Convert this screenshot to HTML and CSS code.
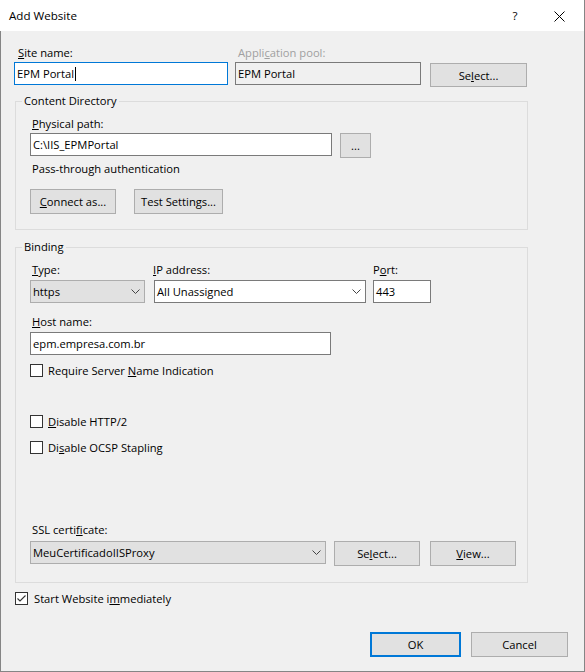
FILE: index.html
```html
<!DOCTYPE html>
<html>
<head>
<meta charset="utf-8">
<title>Add Website</title>
<link rel="stylesheet" href="styles.css">
</head>
<body>
<div class="window">
  <div class="titlebar">
    <span class="title">Add Website</span>
    <span class="help">?</span>
    <svg class="close" width="11" height="11" viewBox="0 0 11 11"><path d="M0.5 0.5 L10.5 10.5 M10.5 0.5 L0.5 10.5" stroke="#000" stroke-width="1" fill="none"/></svg>
  </div>
  <div class="body">
    <div class="toprow">
      <div class="lbl lbl-site"><u>S</u>ite name:</div>
      <div class="lbl lbl-pool disabled-text">Appli<u>c</u>ation pool:</div>
      <div></div>
      <div class="field focus w-site">EPM Portal<span class="caret"></span></div>
      <div class="field disabled w-pool">EPM Portal</div>
      <div class="btn btn-pool">Se<u>l</u>ect...</div>
    </div>

    <fieldset class="group content-dir">
      <legend>Content Directory</legend>
      <div class="lbl pl2"><u>P</u>hysical path:</div>
      <div class="row path-row">
        <div class="field w-path">C:\IIS_EPMPortal</div>
        <div class="btn btn-dots">...</div>
      </div>
      <div class="lbl pl2 pass">Pass-through authentication</div>
      <div class="row btn-row">
        <div class="btn btn-connect"><u>C</u>onnect as...</div>
        <div class="btn btn-test">Test Settin<u>g</u>s...</div>
      </div>
    </fieldset>

    <fieldset class="group binding">
      <legend>Binding</legend>
      <div class="bind-grid">
        <div class="lbl pl2"><u>T</u>ype:</div>
        <div class="lbl lbl-ip"><u>I</u>P address:</div>
        <div class="lbl">P<u>o</u>rt:</div>
        <div class="select w-type"><span>https</span><svg class="chev" width="9" height="5" viewBox="0 0 9 5"><path d="M0.5 0.5 L4.5 4.5 L8.5 0.5" stroke="#444" stroke-width="1" fill="none"/></svg></div>
        <div class="field combo w-ip"><span>All Unassigned</span><svg class="chev" width="9" height="5" viewBox="0 0 9 5"><path d="M0.5 0.5 L4.5 4.5 L8.5 0.5" stroke="#444" stroke-width="1" fill="none"/></svg></div>
        <div class="field w-port">443</div>
      </div>
      <div class="lbl pl2 host-lbl"><u>H</u>ost name:</div>
      <div class="field w-host host">epm.empresa.com.br</div>

      <div class="check sni"><span class="box"></span><span class="ctext">Require Server <u>N</u>ame Indication</span></div>
      <div class="check http2"><span class="box"></span><span class="ctext"><u>D</u>isable HTTP/2</span></div>
      <div class="check ocsp"><span class="box"></span><span class="ctext">Di<u>s</u>able OCSP Stapling</span></div>

      <div class="lbl pl2 ssl-lbl">SSL certi<u>f</u>icate:</div>
      <div class="row ssl-row">
        <div class="select w-ssl"><span>MeuCertificadoIISProxy</span><svg class="chev" width="9" height="5" viewBox="0 0 9 5"><path d="M0.5 0.5 L4.5 4.5 L8.5 0.5" stroke="#444" stroke-width="1" fill="none"/></svg></div>
        <div class="btn btn-ssl-select">Se<u>l</u>ect...</div>
        <div class="btn btn-view"><u>V</u>iew...</div>
      </div>
    </fieldset>

    <div class="check start"><span class="box checked"><svg width="11" height="11" viewBox="0 0 11 11"><path d="M1.5 5.5 L4 8 L9.5 2.5" stroke="#333" stroke-width="1.1" fill="none"/></svg></span><span class="ctext">Start Website i<u>m</u>mediately</span></div>

    <div class="actions">
      <div class="btn btn-ok">OK</div>
      <div class="btn btn-cancel">Cancel</div>
    </div>
  </div>
</div>
</body>
</html>
```
FILE: styles.css
```css
* { box-sizing: border-box; }
html, body { margin: 0; padding: 0; }
body {
  font-family: "Open Sans", "Noto Sans", sans-serif;
  font-size: 11.2px;
  color: #000;
  background: #fff;
}
u { text-decoration: underline; text-underline-offset: 1px; }

.window {
  width: 585px;
  height: 672px;
  border-right: 1px solid #858585;
  border-bottom: 1px solid #858585;
  display: flex;
  flex-direction: column;
  background: #f0f0f0;
}
.titlebar {
  height: 31px;
  flex: none;
  background: #fff;
  display: flex;
  align-items: center;
  padding: 0 19px 0 9px;
  font-size: 11.6px;
}
.title { flex: 1; }
.help { width: 10px; text-align: center; margin-right: 34px; }
.close { display: block; margin-top: 1px; }

.body {
  flex: 1;
  border-left: 1px solid #858585;
  padding: 14px 15px 0 13px;
}

.lbl { height: 16px; line-height: 16px; white-space: nowrap; }
.pl2 { padding-left: 2px; }
.disabled-text { color: #a0a0a0; }

.field {
  height: 23px;
  border: 1px solid #7a7a7a;
  background: #fff;
  line-height: 21px;
  padding-left: 2px;
  white-space: nowrap;
  display: flex;
  align-items: center;
}
.field.focus { border-color: #0078d7; }
.field.disabled { background: #f0f0f0; }
.caret { display: inline-block; width: 1px; height: 14px; background: #000; margin-left: 1px; }

.select {
  height: 23px;
  border: 1px solid #adadad;
  background: #e1e1e1;
  padding: 0 4px 0 2px;
  display: flex;
  align-items: center;
  justify-content: space-between;
  white-space: nowrap;
}
.combo { justify-content: space-between; padding-right: 4px; }
.chev { display: block; flex: none; }

.btn {
  height: 25px;
  border: 1px solid #adadad;
  background: #e1e1e1;
  display: flex;
  align-items: center;
  justify-content: center;
  white-space: nowrap;
  flex: none;
}

/* top row */
.toprow {
  display: grid;
  grid-template-columns: 221px 195px 97px;
  row-gap: 1px;
  align-items: start;
}
.lbl-site { padding-left: 4px; }
.lbl-pool { padding-left: 3px; }
.w-site { width: 214px; }
.w-pool { width: 186px; }
.btn-pool { width: 97px; height: 24px; margin-top: 1px; }

/* groups */
.group {
  margin: 6px 0 0 1px;
  width: 513px;
  min-width: 0;
  border: 1px solid #dcdcdc;
  padding: 7px 0 15px 14px;
}
.group legend {
  margin-left: -8px;
  padding: 0 2px;
  line-height: 16px;
  height: 16px;
}
.binding { margin-top: 9px; padding-bottom: 16px; }

.row { display: flex; align-items: flex-start; }
.path-row { margin-top: 1px; }
.w-path { width: 302px; }
.btn-dots { width: 31px; margin-left: 8px; }
.pass { margin-top: 3px; }
.btn-row { margin-top: 12px; }
.btn-connect { width: 86px; }
.btn-test { width: 89px; margin-left: 18px; }

.bind-grid {
  display: grid;
  grid-template-columns: 124px 219px 58px;
  row-gap: 2px;
}
.lbl-ip { margin-left: -1px; }
.w-type { width: 115px; }
.w-ip { width: 212px; }
.w-port { width: 58px; }
.host-lbl { margin-top: 11px; }
.host { margin-top: 2px; }
.w-host { width: 301px; }

.check {
  display: flex;
  align-items: flex-start;
  height: 16px;
  white-space: nowrap;
}
.check .box {
  width: 13px;
  height: 13px;
  border: 1px solid #333;
  background: #fff;
  margin: 1px 5px 0 0;
  flex: none;
  display: flex;
  align-items: center;
  justify-content: center;
}
.ctext { line-height: 15px; }
.sni { margin-top: 8px; }
.http2 { margin-top: 35px; }
.ocsp { margin-top: 10px; }
.ssl-lbl { margin-top: 66px; }
.ssl-row { margin-top: 3px; }
.w-ssl { width: 296px; height: 23px; }
.btn-ssl-select { width: 86px; margin-left: 8px; }
.btn-view { width: 86px; margin-left: 10px; }

.start { margin: 8px 0 0 1px; }
.start .box { margin-right: 6px; }

.actions {
  display: flex;
  justify-content: flex-end;
  margin-top: 25px;
  padding-right: 1px;
}
.btn-ok { width: 91px; border: 2px solid #0078d7; }
.btn-cancel { width: 97px; margin-left: 10px; }
```
